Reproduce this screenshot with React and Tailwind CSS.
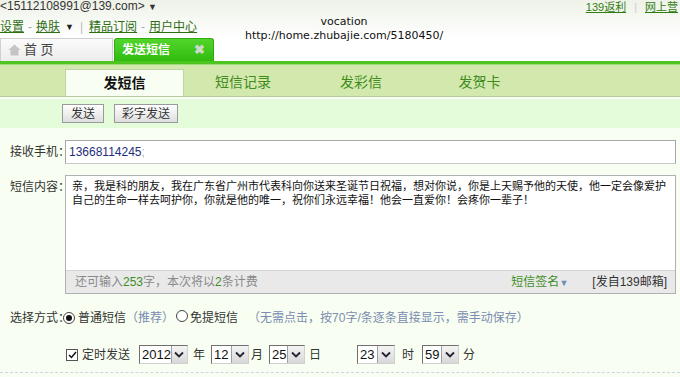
import React from "react";

const F = { fontFamily: '"Liberation Sans", "Noto Sans CJK SC", sans-serif' };

function Sel({ v, w }) {
  return (
    <div className={`flex h-[19px] border border-t-[#707070] border-l-[#707070] border-r-[#d0d0d0] border-b-[#d0d0d0] bg-white`} style={{ width: w }}>
      <div className="flex-1 pl-[2px] text-[13px] leading-[17px] text-[#111]">{v}</div>
      <div className="w-[17px] h-[17px] bg-gradient-to-b from-[#f4f4f4] to-[#d8d8d8] border-l border-[#a0a0a0] flex items-center justify-center">
        <svg width="10" height="7" viewBox="0 0 10 7"><path d="M1 1.5 L5 5.5 L9 1.5" fill="none" stroke="#223" strokeWidth="1.8" /></svg>
      </div>
    </div>
  );
}

function Radio({ on }) {
  return (
    <span className="inline-flex w-[12px] h-[12px] rounded-full border border-[#444] bg-white items-center justify-center">
      {on && <span className="w-[6px] h-[6px] rounded-full bg-[#111]" />}
    </span>
  );
}

export default function App() {
  return (
    <div className="w-[680px] h-[377px] overflow-hidden bg-[#f8fff2] relative text-[12px] text-[#333]" style={F}>
      {/* header */}
      <div className="h-[38px] bg-gradient-to-b from-[#eef2e8] to-white">
        <div className="h-[15px] flex justify-between items-start">
          <div className="text-[12px] leading-[13px] text-[#333]">&lt;15112108991@139.com&gt; <span className="text-[9px]">▼</span></div>
          <div className="flex items-center text-[11px] leading-[15px] pr-[2px]">
            <span className="underline text-[#2f7d12]">139返利</span>
            <span className="mx-[8px] text-[#ccc]">|</span>
            <span className="underline text-[#2f7d12] whitespace-nowrap">网上营</span>
          </div>
        </div>
        <div className="h-[22px] flex items-center text-[12px] text-[#2d6e12] leading-[16px] pt-[2px]">
          <span className="underline">设置</span>
          <span className="mx-[4px] text-[#aaa]">-</span>
          <span className="underline">换肤</span>
          <span className="ml-[5px] text-[9px] text-[#222]">▼</span>
          <span className="mx-[6px] text-[#bbb]">|</span>
          <span className="underline">精品订阅</span>
          <span className="mx-[4px] text-[#aaa]">-</span>
          <span className="underline">用户中心</span>
        </div>
      </div>
      {/* watermark */}
      <div className="absolute left-[245px] top-[15px] text-[11px] leading-[14px] text-[#111] text-center" style={{ fontFamily: '"DejaVu Sans", sans-serif' }}>
        <div>vocation</div>
        <div>http://home.zhubajie.com/5180450/</div>
      </div>
      {/* tabs */}
      <div className="h-[23px] flex items-end bg-white">
        <div className="w-[113px] h-[23px] border border-b-0 border-[#d0d0d0] bg-gradient-to-b from-[#fbfbfb] to-[#ececec] flex items-center pl-[7px] gap-[3px] text-[13px] text-[#444]">
          <svg width="13" height="12" viewBox="0 0 13 12"><path d="M6.5 0.5 L12.5 6 L10.5 6 L10.5 11.5 L2.5 11.5 L2.5 6 L0.5 6 Z" fill="#c4c4c4" /></svg>
          <span>首 页</span>
        </div>
        <div className="w-[100px] h-[23px] ml-[1px] rounded-t-[3px] border border-b-0 border-[#36a815] bg-gradient-to-b from-[#52d52a] to-[#2fbb0d] flex items-center justify-between pl-[7px] pr-[8px] text-white font-bold text-[12px]">
          <span>发送短信</span>
          <span className="text-[#cfd8cc] text-[13px]">✖</span>
        </div>
      </div>
      <div className="h-[3px] bg-[#4ec421]" />
      <div className="h-[1px] bg-[#9edb7a]" />
      {/* sub tabs */}
      <div className="h-[32px] bg-[#d2e8ad] flex items-end pl-[65px] border-b border-[#b8c9a0]">
        <div className="w-[119px] h-[27px] bg-[#f8fff2] border border-b-0 border-[#c2d3ab] flex items-center justify-center text-[14px] font-bold text-[#111]">发短信</div>
        <div className="w-[118px] h-[27px] flex items-center justify-center text-[14px] text-[#3f8c1c]">短信记录</div>
        <div className="w-[118px] h-[27px] flex items-center justify-center text-[14px] text-[#3f8c1c]">发彩信</div>
        <div className="w-[119px] h-[27px] flex items-center justify-center text-[14px] text-[#3f8c1c]">发贺卡</div>
      </div>
      <div className="h-[2px] bg-[#f8fff2]" />
      {/* button bar */}
      <div className="h-[29px] bg-[#e4fcd9] flex items-center pl-[62px] gap-[10px]">
        <div className="w-[42px] h-[19px] border border-[#9a9a9a] bg-gradient-to-b from-white to-[#dedede] flex items-center justify-center text-[12px] text-[#333]">发送</div>
        <div className="w-[64px] h-[19px] border border-[#9a9a9a] bg-gradient-to-b from-white to-[#dedede] flex items-center justify-center text-[12px] text-[#333]">彩字发送</div>
      </div>
      {/* form */}
      <div className="flex items-center mt-[12px] pl-[10px]">
        <div className="w-[55px] shrink-0 whitespace-nowrap text-[12px]">接收手机：</div>
        <div className="w-[611px] shrink-0 h-[24px] bg-white border border-[#a8a8a8] border-b-[#c8c8c8] flex items-center pl-[3px] text-[12px] text-[#1d2f7a]">
          13668114245<span className="text-[#aab]">;</span>
        </div>
      </div>
      <div className="flex items-start mt-[11px] pl-[10px]">
        <div className="w-[55px] shrink-0 whitespace-nowrap text-[12px] pt-[3px]">短信内容：</div>
        <div className="w-[611px] shrink-0 h-[119px] bg-white border border-[#b0b0b0] flex flex-col">
          <div className="flex-1 pl-[6px] pr-[6px] pt-[3px] text-[11px] leading-[14px] text-[#111] whitespace-nowrap">
            亲，我是科的朋友，我在广东省广州市代表科向你送来圣诞节日祝福，想对你说，你是上天赐予他的天使，他一定会像爱护<br />
            自己的生命一样去呵护你，你就是他的唯一，祝你们永远幸福！他会一直爱你！会疼你一辈子！
          </div>
          <div className="h-[23px] bg-[#e9e9e9] border-t border-[#d4d4d4] flex items-center pl-[9px] pr-[8px] text-[12px] text-[#8a8a8a]">
            <span>还可输入<span className="text-[#3e8e1f]">253</span>字，本次将以<span className="text-[#3e8e1f]">2</span>条计费</span>
            <span className="ml-auto text-[#3e8e1f]">短信签名<span className="text-[#6a8fb8] text-[9px]">▼</span></span>
            <span className="ml-[24px] text-[#333]">[发自139邮箱]</span>
          </div>
        </div>
      </div>
      <div className="flex items-center mt-[16px] pl-[10px] h-[16px] whitespace-nowrap">
        <div className="w-[53px] shrink-0">选择方式：</div>
        <Radio on />
        <span className="ml-[3px]">普通短信</span>
        <span className="text-[#7a8cb0]">（推荐）</span>
        <span className="ml-[2px]"><Radio /></span>
        <span className="ml-[2px]">免提短信</span>
        <span className="ml-[10px] text-[#7a8cb0]">（无需点击，按70字/条逐条直接显示，需手动保存）</span>
      </div>
      <div className="flex items-center mt-[19px] pl-[66px] h-[19px] whitespace-nowrap">
        <span className="w-[12px] h-[12px] border border-[#555] bg-white flex items-center justify-center">
          <svg width="9" height="8" viewBox="0 0 9 8"><path d="M1 4 L3.5 6.5 L8 1" fill="none" stroke="#111" strokeWidth="1.5" /></svg>
        </span>
        <span className="ml-[4px] mr-[9px]">定时发送</span>
        <Sel v="2012" w={49} />
        <span className="ml-[5px] mr-[6px]">年</span>
        <Sel v="12" w={38} />
        <span className="ml-[2px] mr-[6px]">月</span>
        <Sel v="25" w={36} />
        <span className="ml-[4px]">日</span>
        <span className="w-[36px]" />
        <Sel v="23" w={38} />
        <span className="ml-[7px] mr-[8px]">时</span>
        <Sel v="59" w={37} />
        <span className="ml-[4px]">分</span>
      </div>
      <div className="mt-[8px] border-t border-dashed border-[#c8d6e6]" />
    </div>
  );
}
